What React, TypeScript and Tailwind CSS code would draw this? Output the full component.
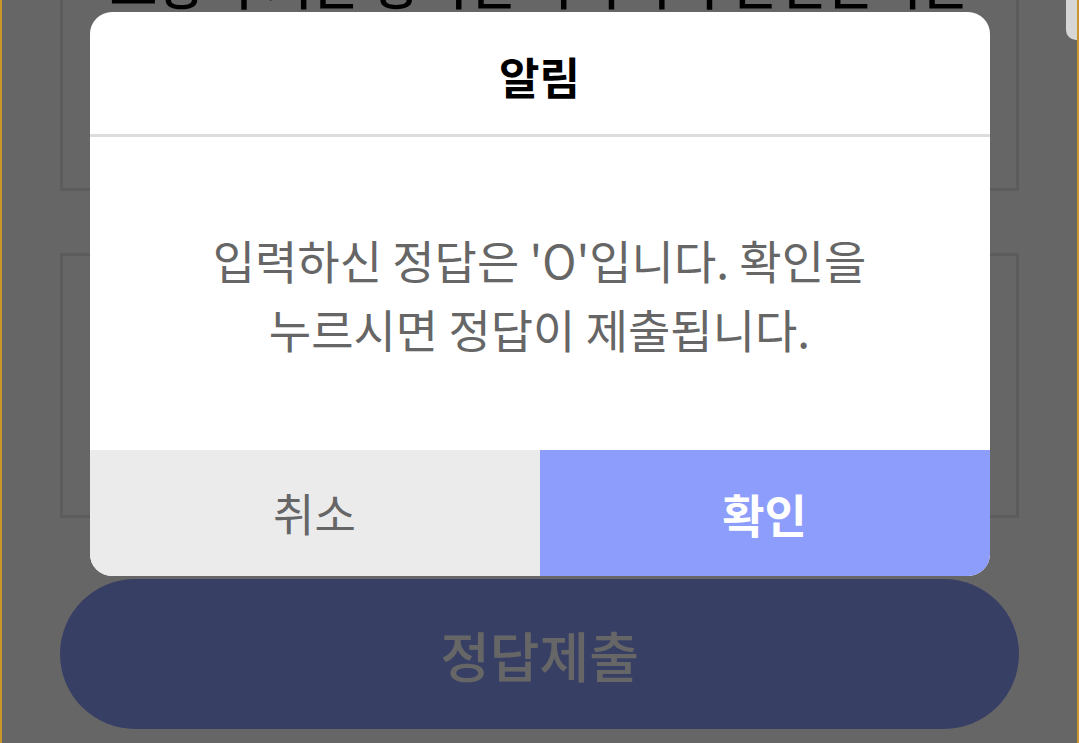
const font = "font-['Noto_Sans_CJK_KR','Noto_Sans',sans-serif]";

function QuizPage() {
  return (
    <div className="flex flex-col gap-[62px] px-[58px]">
      {/* question card, scrolled past its top */}
      <div className="-mt-[210px] flex h-[401px] flex-col border-[3px] border-[#e6e6e6] bg-white">
        <p className="mt-[160px] text-center text-[52px] leading-[60px] font-medium text-black">
          소방의 기본 장비인 사다리의 안전관리는
        </p>
      </div>

      {/* answer card (hidden under the dialog) */}
      <div className="h-[265px] border-[3px] border-[#e6e6e6] bg-white" />

      <button className="-mt-[1px] flex h-[150px] items-center justify-center rounded-full bg-[#8d9dfb] text-[54px] font-medium text-white">
        정답제출
      </button>
    </div>
  );
}

function ConfirmDialog() {
  return (
    <div className="w-[900px] overflow-hidden rounded-[22px] bg-white">
      <div className="flex h-[125px] items-center justify-center border-b-[3px] border-[#dddddd] pt-[6px]">
        <h2 className="text-[44px] font-bold text-black">알림</h2>
      </div>
      <div className="flex h-[313px] items-center justify-center">
        <p className="text-center text-[46px] leading-[69px] text-[#666666]">
          입력하신 정답은 'O'입니다. 확인을
          <br />
          누르시면 정답이 제출됩니다.
        </p>
      </div>
      <div className="grid h-[126px] grid-cols-2">
        <button className="flex items-center justify-center bg-[#ebebeb] text-[45px] text-[#666666]">
          취소
        </button>
        <button className="flex items-center justify-center bg-[#8d9dfb] text-[46px] font-bold text-white">
          확인
        </button>
      </div>
    </div>
  );
}

export default function App() {
  return (
    <div className={`${font} relative h-[743px] overflow-hidden border-x-2 border-[#c9962a] bg-white`}>
      <QuizPage />

      {/* dim + dialog */}
      <div className="absolute inset-0 flex items-start justify-center bg-black/60 pt-[12px]">
        <ConfirmDialog />
      </div>

      {/* scroll thumb */}
      <div className="absolute top-0 right-[-2px] h-[40px] w-[13px] rounded-bl-[10px] bg-[#d6d6d6]" />
    </div>
  );
}
